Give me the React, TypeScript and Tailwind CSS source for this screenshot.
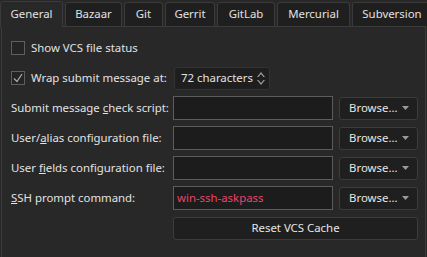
const TABS: Array<[string, number]> = [
  ['General', 63],
  ['Bazaar', 57],
  ['Git', 39],
  ['Gerrit', 50],
  ['GitLab', 58],
  ['Mercurial', 73],
  ['Subversion', 80],
]

function Caret() {
  return (
    <svg width="7" height="4" viewBox="0 0 7 4" className="shrink-0">
      <path d="M0 0 L7 0 L3.5 4 Z" fill="#9a9a9a" />
    </svg>
  )
}

function BrowseButton() {
  return (
    <button className="flex h-[23px] w-[79px] items-center justify-between rounded-[3px] border border-[#3c3c3c] bg-[#1f1f1f] pl-[9px] pr-[8px] text-[#e6e6e6]">
      <span>Browse...</span>
      <Caret />
    </button>
  )
}

function Field({ value }: { value?: string }) {
  return (
    <div className="flex h-[24px] w-[160px] items-center border border-[#5c5c5c] bg-[#1c1c1c] px-[3px] text-[#e8456b]">
      {value}
    </div>
  )
}

function Row({ label, value }: { label: React.ReactNode; value?: string }) {
  return (
    <div className="flex h-[24px] items-center">
      <div className="w-[162px] shrink-0 whitespace-nowrap">{label}</div>
      <Field value={value} />
      <div className="ml-[6px]">
        <BrowseButton />
      </div>
    </div>
  )
}

export default function App() {
  return (
    <div
      className="h-[257px] w-[427px] overflow-hidden bg-[#282828] text-[11.4px] text-[#e2e2e2]"
      style={{ fontFamily: '"Noto Sans", "Open Sans", sans-serif' }}
    >
      <div className="flex h-[26px] items-end gap-[2px]">
        {TABS.map(([t, w], i) =>
          i === 0 ? (
            <div
              key={t}
              style={{ width: w }}
              className="relative z-10 -mb-px flex h-[26px] shrink-0 items-center justify-center rounded-t-[3px] border border-b-0 border-[#3a3a3a] bg-[#282828] pb-[2px]"
            >
              {t}
            </div>
          ) : (
            <div
              key={t}
              style={{ width: w }}
              className="flex h-[24px] shrink-0 items-center justify-center rounded-t-[3px] border border-b-0 border-[#3a3a3a] bg-[#1f1f1f] pb-[1px]"
            >
              {t}
            </div>
          ),
        )}
      </div>
      <div className="ml-px h-[240px] w-[425px] border-l border-r border-t border-[#3a3a3a] pl-[9px] pt-[9px]">
        <div className="flex flex-col gap-[6px]">
          <div className="flex h-[24px] items-center">
            <span className="h-[14px] w-[14px] border border-[#5e5e5e] bg-[#242424]" />
            <span className="ml-[6px]">Show VCS file status</span>
          </div>
          <div className="flex h-[24px] items-center">
            <span className="flex h-[14px] w-[14px] items-center justify-center border border-[#5e5e5e] bg-[#242424]">
              <svg width="10" height="10" viewBox="0 0 10 10">
                <path d="M1 5.5 L4 8.5 L9 1" fill="none" stroke="#a8a8a8" strokeWidth="1.3" />
              </svg>
            </span>
            <span className="ml-[6px] whitespace-nowrap">Wrap submit message at:</span>
            <div className="ml-auto mr-[155px] flex h-[23px] w-[96px] items-center rounded-[3px] border border-[#333] bg-[#1e1e1e] pl-[6px]">
              <span className="flex-1">72 characters</span>
              <div className="mr-[4px] flex flex-col items-center gap-[3px]">
                <svg width="8" height="5" viewBox="0 0 8 5">
                  <path d="M0 5 L4 0 L8 5 L6.5 5 L4 2 L1.5 5 Z" fill="#9a9a9a" />
                </svg>
                <svg width="8" height="5" viewBox="0 0 8 5">
                  <path d="M0 0 L4 5 L8 0 L6.5 0 L4 3 L1.5 0 Z" fill="#9a9a9a" />
                </svg>
              </div>
            </div>
          </div>
          <Row
            label={
              <>
                Submit message <span className="underline">c</span>heck script:
              </>
            }
          />
          <Row
            label={
              <>
                User/<span className="underline">a</span>lias configuration file:
              </>
            }
          />
          <Row
            label={
              <>
                User <span className="underline">f</span>ields configuration file:
              </>
            }
          />
          <Row
            label={
              <>
                <span className="underline">S</span>SH prompt command:
              </>
            }
            value="win-ssh-askpass"
          />
          <div className="flex h-[24px] items-center">
            <div className="w-[162px] shrink-0" />
            <button className="flex h-[23px] w-[245px] items-center justify-center rounded-[3px] border border-[#3c3c3c] bg-[#1f1f1f] text-[#e6e6e6]">
              Reset VCS Cache
            </button>
          </div>
        </div>
      </div>
    </div>
  )
}
